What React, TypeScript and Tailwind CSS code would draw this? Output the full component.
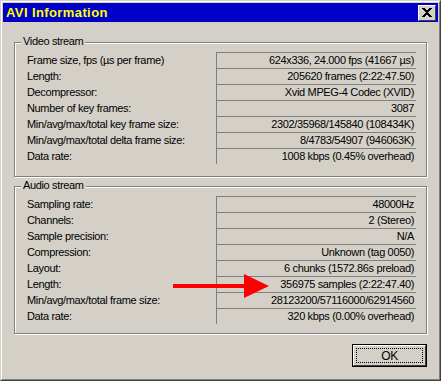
import React from "react";

const video: [string, string][] = [
  ["Frame size, fps (µs per frame)", "624x336, 24.000 fps (41667 µs)"],
  ["Length:", "205620 frames (2:22:47.50)"],
  ["Decompressor:", "Xvid MPEG-4 Codec (XVID)"],
  ["Number of key frames:", "3087"],
  ["Min/avg/max/total key frame size:", "2302/35968/145840 (108434K)"],
  ["Min/avg/max/total delta frame size:", "8/4783/54907 (946063K)"],
  ["Data rate:", "1008 kbps (0.45% overhead)"],
];

const audio: [string, string][] = [
  ["Sampling rate:", "48000Hz"],
  ["Channels:", "2 (Stereo)"],
  ["Sample precision:", "N/A"],
  ["Compression:", "Unknown (tag 0050)"],
  ["Layout:", "6 chunks (1572.86s preload)"],
  ["Length:", "356975 samples (2:22:47.40)"],
  ["Min/avg/max/total frame size:", "28123200/57116000/62914560"],
  ["Data rate:", "320 kbps (0.00% overhead)"],
];

const Group = ({ title, rows, className }: { title: string; rows: [string, string][]; className?: string }) => (
  <div
    className={
      "relative mx-[11px] border border-[#808080] shadow-[inset_1px_1px_0_#ffffff,1px_1px_0_#ffffff] pt-[9px] pl-[12px] pr-[10px] " +
      (className ?? "")
    }
  >
    <div className="absolute left-[6px] top-[-8px] px-[2px] bg-[#d4d0c8] leading-[13px]">{title}</div>
    {rows.map(([label, value]) => (
      <div key={label} className="flex h-[16px]">
        <div className="flex-1 flex items-center">{label}</div>
        <div className="w-[200px] h-[16px] border-t border-l border-[#808080] border-b-white border-r-white flex items-center justify-end pr-[2px]">
          {value}
        </div>
      </div>
    ))}
  </div>
);

export default function App() {
  return (
    <div
      className="relative w-[441px] h-[381px] bg-[#d4d0c8] border border-[#d4d0c8] border-b-[#404040] border-r-[#404040] text-black text-[11px] tracking-[-0.35px]"
      style={{ fontFamily: '"Liberation Sans", Arial, sans-serif' }}
    >
      <div className="h-full border border-white border-b-[#808080] border-r-[#808080] p-px flex flex-col">
        <div className="h-[19px] bg-[#0000c8] flex items-center justify-between pl-[3px] pr-[2px]">
          <span className="text-[#ffff00] font-bold text-[13px] tracking-[0.4px]">AVI Information</span>
          <div className="w-[18px] h-[16px] bg-[#d4d0c8] border border-white border-b-[#404040] border-r-[#404040] flex items-center justify-center">
            <svg width="10" height="9" viewBox="0 0 10 9" shapeRendering="crispEdges">
              <path
                d="M0 0h3v1h-3z M7 0h3v1h-3z M1 1h3v1h-3z M6 1h3v1h-3z M2 2h6v1h-6z M3 3h4v1h-4z M4 4h2v1h-2z M3 5h4v1h-4z M2 6h6v1h-6z M1 7h3v1h-3z M6 7h3v1h-3z M0 8h3v1h-3z M7 8h3v1h-3z"
                fill="#000"
              />
            </svg>
          </div>
        </div>
        <Group title="Video stream" rows={video} className="mt-[20px] pb-[12px]" />
        <Group title="Audio stream" rows={audio} className="mt-[9px] pb-[9px]" />
        <div className="flex justify-end mr-[11px] mt-[10px]">
          <div className="w-[75px] h-[23px] border border-black">
            <div className="h-full border border-white border-b-[#404040] border-r-[#404040] p-[2px]">
              <div className="h-full border border-dotted border-black flex items-center justify-center text-[12px]">
                OK
              </div>
            </div>
          </div>
        </div>
      </div>
      <svg className="absolute left-[170px] top-[270px]" width="100" height="30" viewBox="0 0 100 30">
        <path d="M2 15 L75 15" stroke="#ff0000" strokeWidth="4" />
        <path d="M73 3 L98 15 L73 27 Z" fill="#ff0000" />
      </svg>
    </div>
  );
}
